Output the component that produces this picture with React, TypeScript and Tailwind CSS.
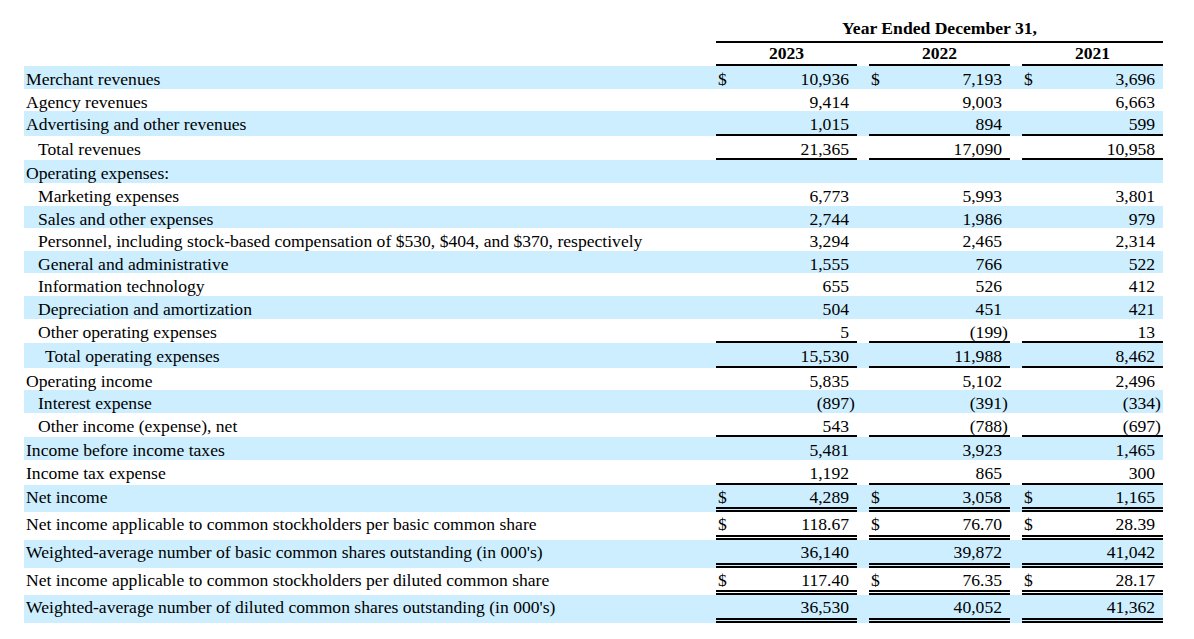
import React from 'react';

type Border = 'none' | 'single' | 'double';

interface Row {
  label: string;
  indent: 0 | 1 | 2;
  vals?: [string, string, string];
  dollar?: boolean;
  border?: Border;
}

const rows: Row[] = [
  { label: 'Merchant revenues', indent: 0, vals: ['10,936', '7,193', '3,696'], dollar: true },
  { label: 'Agency revenues', indent: 0, vals: ['9,414', '9,003', '6,663'] },
  { label: 'Advertising and other revenues', indent: 0, vals: ['1,015', '894', '599'], border: 'single' },
  { label: 'Total revenues', indent: 1, vals: ['21,365', '17,090', '10,958'], border: 'single' },
  { label: 'Operating expenses:', indent: 0 },
  { label: 'Marketing expenses', indent: 1, vals: ['6,773', '5,993', '3,801'] },
  { label: 'Sales and other expenses', indent: 1, vals: ['2,744', '1,986', '979'] },
  { label: 'Personnel, including stock-based compensation of $530, $404, and $370, respectively', indent: 1, vals: ['3,294', '2,465', '2,314'] },
  { label: 'General and administrative', indent: 1, vals: ['1,555', '766', '522'] },
  { label: 'Information technology', indent: 1, vals: ['655', '526', '412'] },
  { label: 'Depreciation and amortization', indent: 1, vals: ['504', '451', '421'] },
  { label: 'Other operating expenses', indent: 1, vals: ['5', '(199)', '13'], border: 'single' },
  { label: 'Total operating expenses', indent: 2, vals: ['15,530', '11,988', '8,462'], border: 'single' },
  { label: 'Operating income', indent: 0, vals: ['5,835', '5,102', '2,496'] },
  { label: 'Interest expense', indent: 1, vals: ['(897)', '(391)', '(334)'] },
  { label: 'Other income (expense), net', indent: 1, vals: ['543', '(788)', '(697)'], border: 'single' },
  { label: 'Income before income taxes', indent: 0, vals: ['5,481', '3,923', '1,465'] },
  { label: 'Income tax expense', indent: 0, vals: ['1,192', '865', '300'], border: 'single' },
  { label: 'Net income', indent: 0, vals: ['4,289', '3,058', '1,165'], dollar: true, border: 'double' },
  { label: 'Net income applicable to common stockholders per basic common share', indent: 0, vals: ['118.67', '76.70', '28.39'], dollar: true, border: 'double' },
  { label: "Weighted-average number of basic common shares outstanding (in 000's)", indent: 0, vals: ['36,140', '39,872', '41,042'], border: 'double' },
  { label: 'Net income applicable to common stockholders per diluted common share', indent: 0, vals: ['117.40', '76.35', '28.17'], dollar: true, border: 'double' },
  { label: "Weighted-average number of diluted common shares outstanding (in 000's)", indent: 0, vals: ['36,530', '40,052', '41,362'], border: 'double' },
];

const indentCls = ['pl-[2px]', 'pl-[14px]', 'pl-[21px]'];

const borderCls = (b?: Border) =>
  b === 'single'
    ? 'border-b-2 border-solid border-black'
    : b === 'double'
    ? 'border-b-[5px] border-double border-black'
    : '';

// row box: double-underlined rows sit a touch higher so the $ clears the rule
const rowBox = (b?: Border) => (b === 'double' ? 'h-[22.7px] pt-[1px]' : 'h-[22.6px] pt-[2px]');

const ValueCell = ({ v, dollar, border }: { v?: string; dollar?: boolean; border?: Border }) => {
  const neg = !!v && v.startsWith('(');
  const num = neg ? v!.slice(0, -1) : v;
  return (
    <td className={`p-0 align-top bg-clip-padding ${borderCls(border)}`}>
      <div className={`flex ${rowBox(border)}`}>
        <span className="w-[14px] pl-[2px]">{dollar ? '$' : ''}</span>
        <span className="flex-1 text-right">{num}</span>
        <span className="w-[8px]">{neg ? ')' : ''}</span>
      </div>
    </td>
  );
};

export default function App() {
  return (
    <div className="min-h-[639px] bg-white pt-[17px] text-black font-['Liberation_Serif','Times_New_Roman',serif] text-[17.6px] leading-[22.6px]">
      <table className="ml-[24px] table-fixed border-separate border-spacing-0 w-[1139px]">
        <colgroup>
          <col className="w-[692px]" />
          <col className="w-[141px]" />
          <col className="w-[12px]" />
          <col className="w-[141px]" />
          <col className="w-[12px]" />
          <col className="w-[141px]" />
        </colgroup>
        <thead>
          <tr>
            <td className="p-0" />
            <td colSpan={5} className="p-0 align-top border-b-2 border-black">
              <div className="h-[23.7px] text-center font-bold">Year Ended December 31,</div>
            </td>
          </tr>
          <tr>
            <td className="p-0" />
            <td className="p-0 align-top border-b-2 border-black">
              <div className="h-[21.3px] text-center font-bold leading-[20px]">2023</div>
            </td>
            <td className="p-0" />
            <td className="p-0 align-top border-b-2 border-black">
              <div className="h-[21.3px] text-center font-bold leading-[20px]">2022</div>
            </td>
            <td className="p-0" />
            <td className="p-0 align-top border-b-2 border-black">
              <div className="h-[21.3px] text-center font-bold leading-[20px]">2021</div>
            </td>
          </tr>
        </thead>
        <tbody>
          {rows.map((r, i) => {
            const bg = i % 2 === 0 ? 'bg-[#cceeff]' : 'bg-white';
            return (
              <tr key={i} className={bg}>
                <td className={`p-0 align-top whitespace-nowrap ${indentCls[r.indent]}`}>
                  <div className={rowBox(r.border)}>{r.label}</div>
                </td>
                <ValueCell v={r.vals?.[0]} dollar={r.dollar} border={r.border} />
                <td className="p-0" />
                <ValueCell v={r.vals?.[1]} dollar={r.dollar} border={r.border} />
                <td className="p-0" />
                <ValueCell v={r.vals?.[2]} dollar={r.dollar} border={r.border} />
              </tr>
            );
          })}
        </tbody>
      </table>
    </div>
  );
}
